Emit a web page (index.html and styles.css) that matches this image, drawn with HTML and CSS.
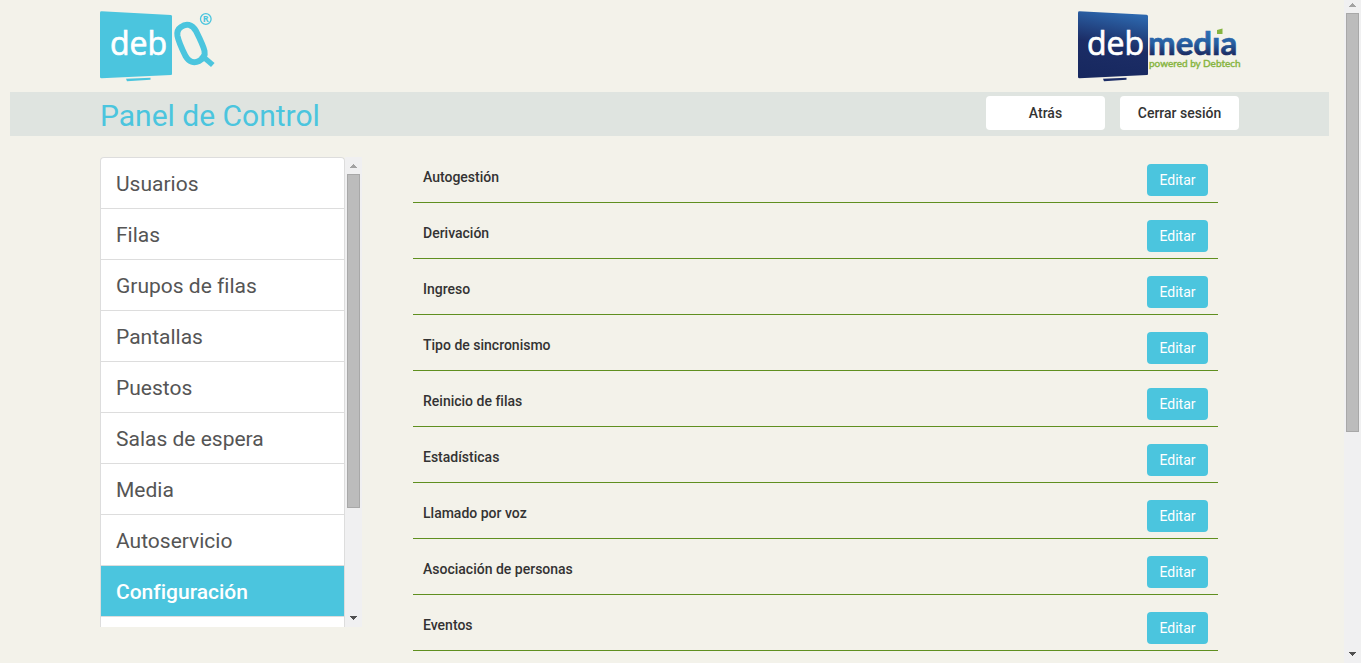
FILE: index.html
```html
<!DOCTYPE html>
<html lang="es">
<head>
<meta charset="utf-8">
<title>Panel de Control</title>
<meta name="viewport" content="width=device-width, initial-scale=1">
<link rel="stylesheet" href="styles.css">
</head>
<body>
<div class="page">
  <header class="brand">
    <svg class="logo-debq" viewBox="0 0 116 72" role="img" aria-label="debQ">
      <path fill="#4bc5de" d="M1.500 0.200 L71 4 Q72 4.200 72 5.500 V63 Q72 64 71 64.100 L1.500 67.300 Q0 67.300 0 66 V1.500 Q0 0.200 1.500 0.200Z"/>
      <path fill="#4bc5de" d="M26 67.800 L50.500 66.800 V68.800 L27 70.200Z"/>
      <text class="logo-deb" x="10" y="44">deb</text>
      <path fill="none" stroke="#4bc5de" stroke-width="6" d="M81 16 C86 12 92 13 96 20 C100 28 103.500 35 104.500 40 C105.500 45 103 48 99 50 C94 52.500 89 51 85.500 45 C82 38 78.500 30 77.500 25 C76.800 21 78 18 81 16Z"/>
      <path fill="none" stroke="#4bc5de" stroke-width="5.500" d="M101 44 L112.800 54"/>
      <circle cx="105.800" cy="8" r="5.300" fill="none" stroke="#4bc5de" stroke-width="1.300"/>
      <text class="logo-mark" x="102.800" y="11.300">R</text>
    </svg>
    <svg class="logo-debmedia" viewBox="0 0 164 72" role="img" aria-label="debmedia powered by Debtech">
      <defs>
        <linearGradient id="screen" x1="0.500" y1="0" x2="0.300" y2="1">
          <stop offset="0" stop-color="#2c67ad"/>
          <stop offset="0.500" stop-color="#1c2d66"/>
          <stop offset="1" stop-color="#17285f"/>
        </linearGradient>
        <linearGradient id="word" gradientUnits="userSpaceOnUse" x1="0" y1="20" x2="0" y2="44">
          <stop offset="0" stop-color="#2d6db4"/>
          <stop offset="0.500" stop-color="#2760a2"/>
          <stop offset="1" stop-color="#1b2a62"/>
        </linearGradient>
      </defs>
      <path fill="url(#screen)" d="M1.500 0.200 L68.500 3.800 Q70 4 70 5.500 V63 Q70 64 69 64.100 L1.500 67.300 Q0 67.300 0 66 V1.500 Q0 0.200 1.500 0.200Z"/>
      <path fill="#1c2d66" d="M25 67.800 L48.500 66.800 V68.800 L26 70.200Z"/>
      <text class="logo-deb" x="9" y="44">deb</text>
      <text class="logo-media" x="70" y="44" fill="url(#word)">medıa</text>
      <path fill="#86b440" d="M139 19 L144.500 17.500 V23 H139Z"/>
      <text class="logo-tag" x="71" y="56">powered by Debtech</text>
    </svg>
  </header>

  <div class="titlebar">
    <h1 class="title">Panel de Control</h1>
    <div class="actions">
      <button class="action" type="button">Atrás</button>
      <button class="action" type="button">Cerrar sesión</button>
    </div>
  </div>

  <div class="content">
    <div class="sidebar">
      <nav class="menu">
        <a class="menu-item" href="#">Usuarios</a>
        <a class="menu-item" href="#">Filas</a>
        <a class="menu-item" href="#">Grupos de filas</a>
        <a class="menu-item" href="#">Pantallas</a>
        <a class="menu-item" href="#">Puestos</a>
        <a class="menu-item" href="#">Salas de espera</a>
        <a class="menu-item" href="#">Media</a>
        <a class="menu-item" href="#">Autoservicio</a>
        <a class="menu-item active" href="#" aria-current="page">Configuración</a>
        <span class="menu-item"></span>
      </nav>
      <div class="scroll scroll-menu" aria-hidden="true">
        <svg class="arrow arrow-up" viewBox="0 0 7 4"><path d="M3 0h1v1h1v1h1v1h1v1H0V3h1V2h1V1h1z"/></svg>
        <div class="track"><div class="thumb"></div></div>
        <svg class="arrow" viewBox="0 0 7 4"><path d="M0 0h7v1H6v1H5v1H4v1H3V3H2V2H1V1H0z"/></svg>
      </div>
    </div>

    <main class="settings">
      <div class="setting"><span class="label">Autogestión</span><button class="edit" type="button">Editar</button></div>
      <div class="setting"><span class="label">Derivación</span><button class="edit" type="button">Editar</button></div>
      <div class="setting"><span class="label">Ingreso</span><button class="edit" type="button">Editar</button></div>
      <div class="setting"><span class="label">Tipo de sincronismo</span><button class="edit" type="button">Editar</button></div>
      <div class="setting"><span class="label">Reinicio de filas</span><button class="edit" type="button">Editar</button></div>
      <div class="setting"><span class="label">Estadísticas</span><button class="edit" type="button">Editar</button></div>
      <div class="setting"><span class="label">Llamado por voz</span><button class="edit" type="button">Editar</button></div>
      <div class="setting"><span class="label">Asociación de personas</span><button class="edit" type="button">Editar</button></div>
      <div class="setting"><span class="label">Eventos</span><button class="edit" type="button">Editar</button></div>
    </main>
  </div>
</div>
<div class="scroll scroll-page" aria-hidden="true">
  <svg class="arrow arrow-up" viewBox="0 0 7 4"><path d="M3 0h1v1h1v1h1v1h1v1H0V3h1V2h1V1h1z"/></svg>
  <div class="track"><div class="thumb"></div></div>
  <svg class="arrow" viewBox="0 0 7 4"><path d="M0 0h7v1H6v1H5v1H4v1H3V3H2V2H1V1H0z"/></svg>
</div>
</body>
</html>
```

FILE: styles.css
```css
* { box-sizing: border-box; }

body {
  margin: 0;
  height: 100vh;
  display: flex;
  overflow: hidden;
  background: #f3f2ea;
  color: #333;
  font-family: Roboto, "Liberation Sans", sans-serif;
  font-size: 14px;
  line-height: 20px;
  font-variant-ligatures: none;
}

.page {
  flex: 1;
  min-width: 0;
  padding: 0 15px 0 10px;
  overflow: hidden;
}

/* Logos */
.brand {
  display: flex;
  justify-content: space-between;
  height: 92px;
  padding: 11px 87px 0 90px;
}
.logo-debq { width: 116px; height: 72px; }
.logo-debmedia { width: 164px; height: 72px; }
.logo-deb { font: 32px "Open Sans", sans-serif; fill: #fff; stroke: #fff; stroke-width: 0.7px; }
.logo-media { font: 700 33px Lato, sans-serif; stroke: url(#word); stroke-width: 0.7px; }
.logo-tag { font: 10px Lato, sans-serif; fill: #86b440; stroke: #86b440; stroke-width: 0.4px; }
.logo-mark { font: 700 9px "Open Sans", sans-serif; fill: #4bc5de; }

/* Title bar */
.titlebar {
  display: flex;
  justify-content: space-between;
  align-items: center;
  height: 44px;
  padding: 0 90px;
  background: #dfe4e0;
}
.title {
  margin: 0;
  padding-top: 4px;
  color: #4bc5de;
  font-size: 30px;
  font-weight: 400;
  line-height: 40px;
}
.actions { display: flex; gap: 15px; padding-bottom: 2px; }
.action {
  width: 119px;
  height: 34px;
  padding: 0;
  border: 0;
  border-radius: 4px;
  background: #fff;
  color: #333;
  font: 500 14px/20px Roboto, sans-serif;
}

/* Columns */
.content {
  display: flex;
  gap: 51px;
  padding: 0 111px 0 90px;
}
.sidebar {
  display: flex;
  flex: none;
  height: 470px;
  margin-top: 21px;
  overflow: hidden;
}
.menu {
  width: 245px;
  border: 1px solid #ddd;
  border-bottom: 0;
  border-radius: 4px 4px 0 0;
  background: #fff;
  overflow: hidden;
}
.menu-item {
  display: block;
  height: 51px;
  padding: 11px 15px 8px;
  border-bottom: 1px solid #ddd;
  color: #555;
  font-size: 21px;
  line-height: 31px;
  text-decoration: none;
}
.menu-item.active {
  background: #4bc5de;
  color: #fff;
  font-weight: 500;
}

.settings { flex: 1; min-width: 0; margin-top: 11px; }
.setting {
  display: flex;
  justify-content: space-between;
  align-items: flex-start;
  padding: 17px 10px 6px;
  border-bottom: 1px solid #5f8f1f;
}
.label { padding-top: 3px; font-weight: 500; }
.edit {
  width: 61px;
  height: 32px;
  padding: 0;
  border: 0;
  border-radius: 4px;
  background: #4bc5de;
  color: #fff;
  font: 14px/20px Roboto, sans-serif;
}

/* Scroll bars */
.scroll {
  display: flex;
  flex: none;
  flex-direction: column;
  align-items: center;
  width: 17px;
  background: #f0f0f1;
}
.scroll-page { padding: 3px 0 7px; }
.scroll-menu { padding: 7px 0; }
.arrow { flex: none; width: 7px; height: 4px; fill: #505050; }
.arrow-up { fill: #a3a3a3; }
.track { flex: 1; width: 13px; }
.thumb { height: 100%; border: 1px solid #a8a8a8; background: #bcbcbc; }
.scroll-page .track { padding: 6px 0 220px; }
.scroll-menu .track { padding: 6px 0 108px; }
```
